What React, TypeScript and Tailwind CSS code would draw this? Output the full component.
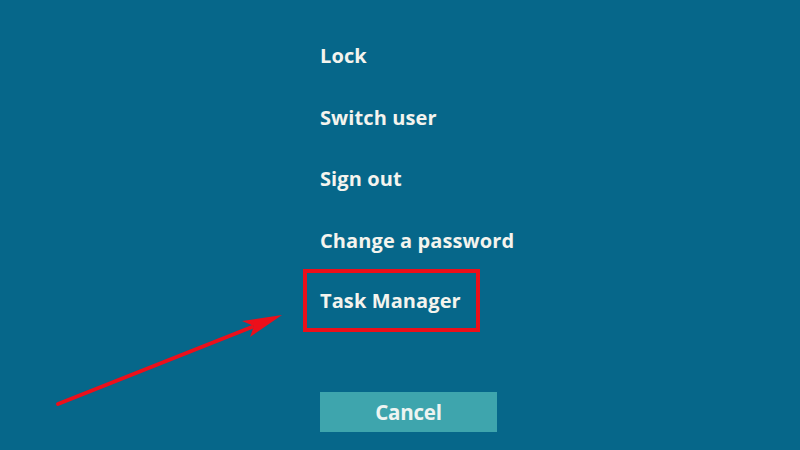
import React from "react";

export default function App() {
  const items = ["Lock", "Switch user", "Sign out", "Change a password"];
  return (
    <div
      className="relative w-[800px] h-[450px] bg-[#06678a] overflow-hidden"
      style={{ fontFamily: '"Open Sans", "Noto Sans", sans-serif' }}
    >
      <div className="flex flex-col pl-[320px] pt-[41px]">
        {items.map((t) => (
          <div key={t} className="h-[61.5px] text-[20px] font-bold text-[#f4f4ee] leading-[30px] tracking-[0.1px]">
            {t}
          </div>
        ))}
        <div className="-ml-[17px] -mt-[18px] w-[177px] h-[63px] border-[4px] border-[#ec0f1a] flex items-center pl-[13px]">
          <span className="text-[20px] font-bold text-[#f4f4ee] leading-[30px] tracking-[0.1px]">Task Manager</span>
        </div>
        <div className="mt-[60px] w-[177px] h-[40px] bg-[#3ea5ad] flex items-center justify-center">
          <span className="text-[20.5px] font-bold text-[#eef4f2] tracking-[-0.2px]">Cancel</span>
        </div>
      </div>
      <svg className="absolute left-0 top-0" width="800" height="450" viewBox="0 0 800 450">
        <line x1="58" y1="404" x2="252" y2="327" stroke="#ec0f1a" strokeWidth="4" strokeLinecap="round" />
        <polygon points="282,315 242,321 254,326 250,337" fill="#ec0f1a" />
      </svg>
    </div>
  );
}
